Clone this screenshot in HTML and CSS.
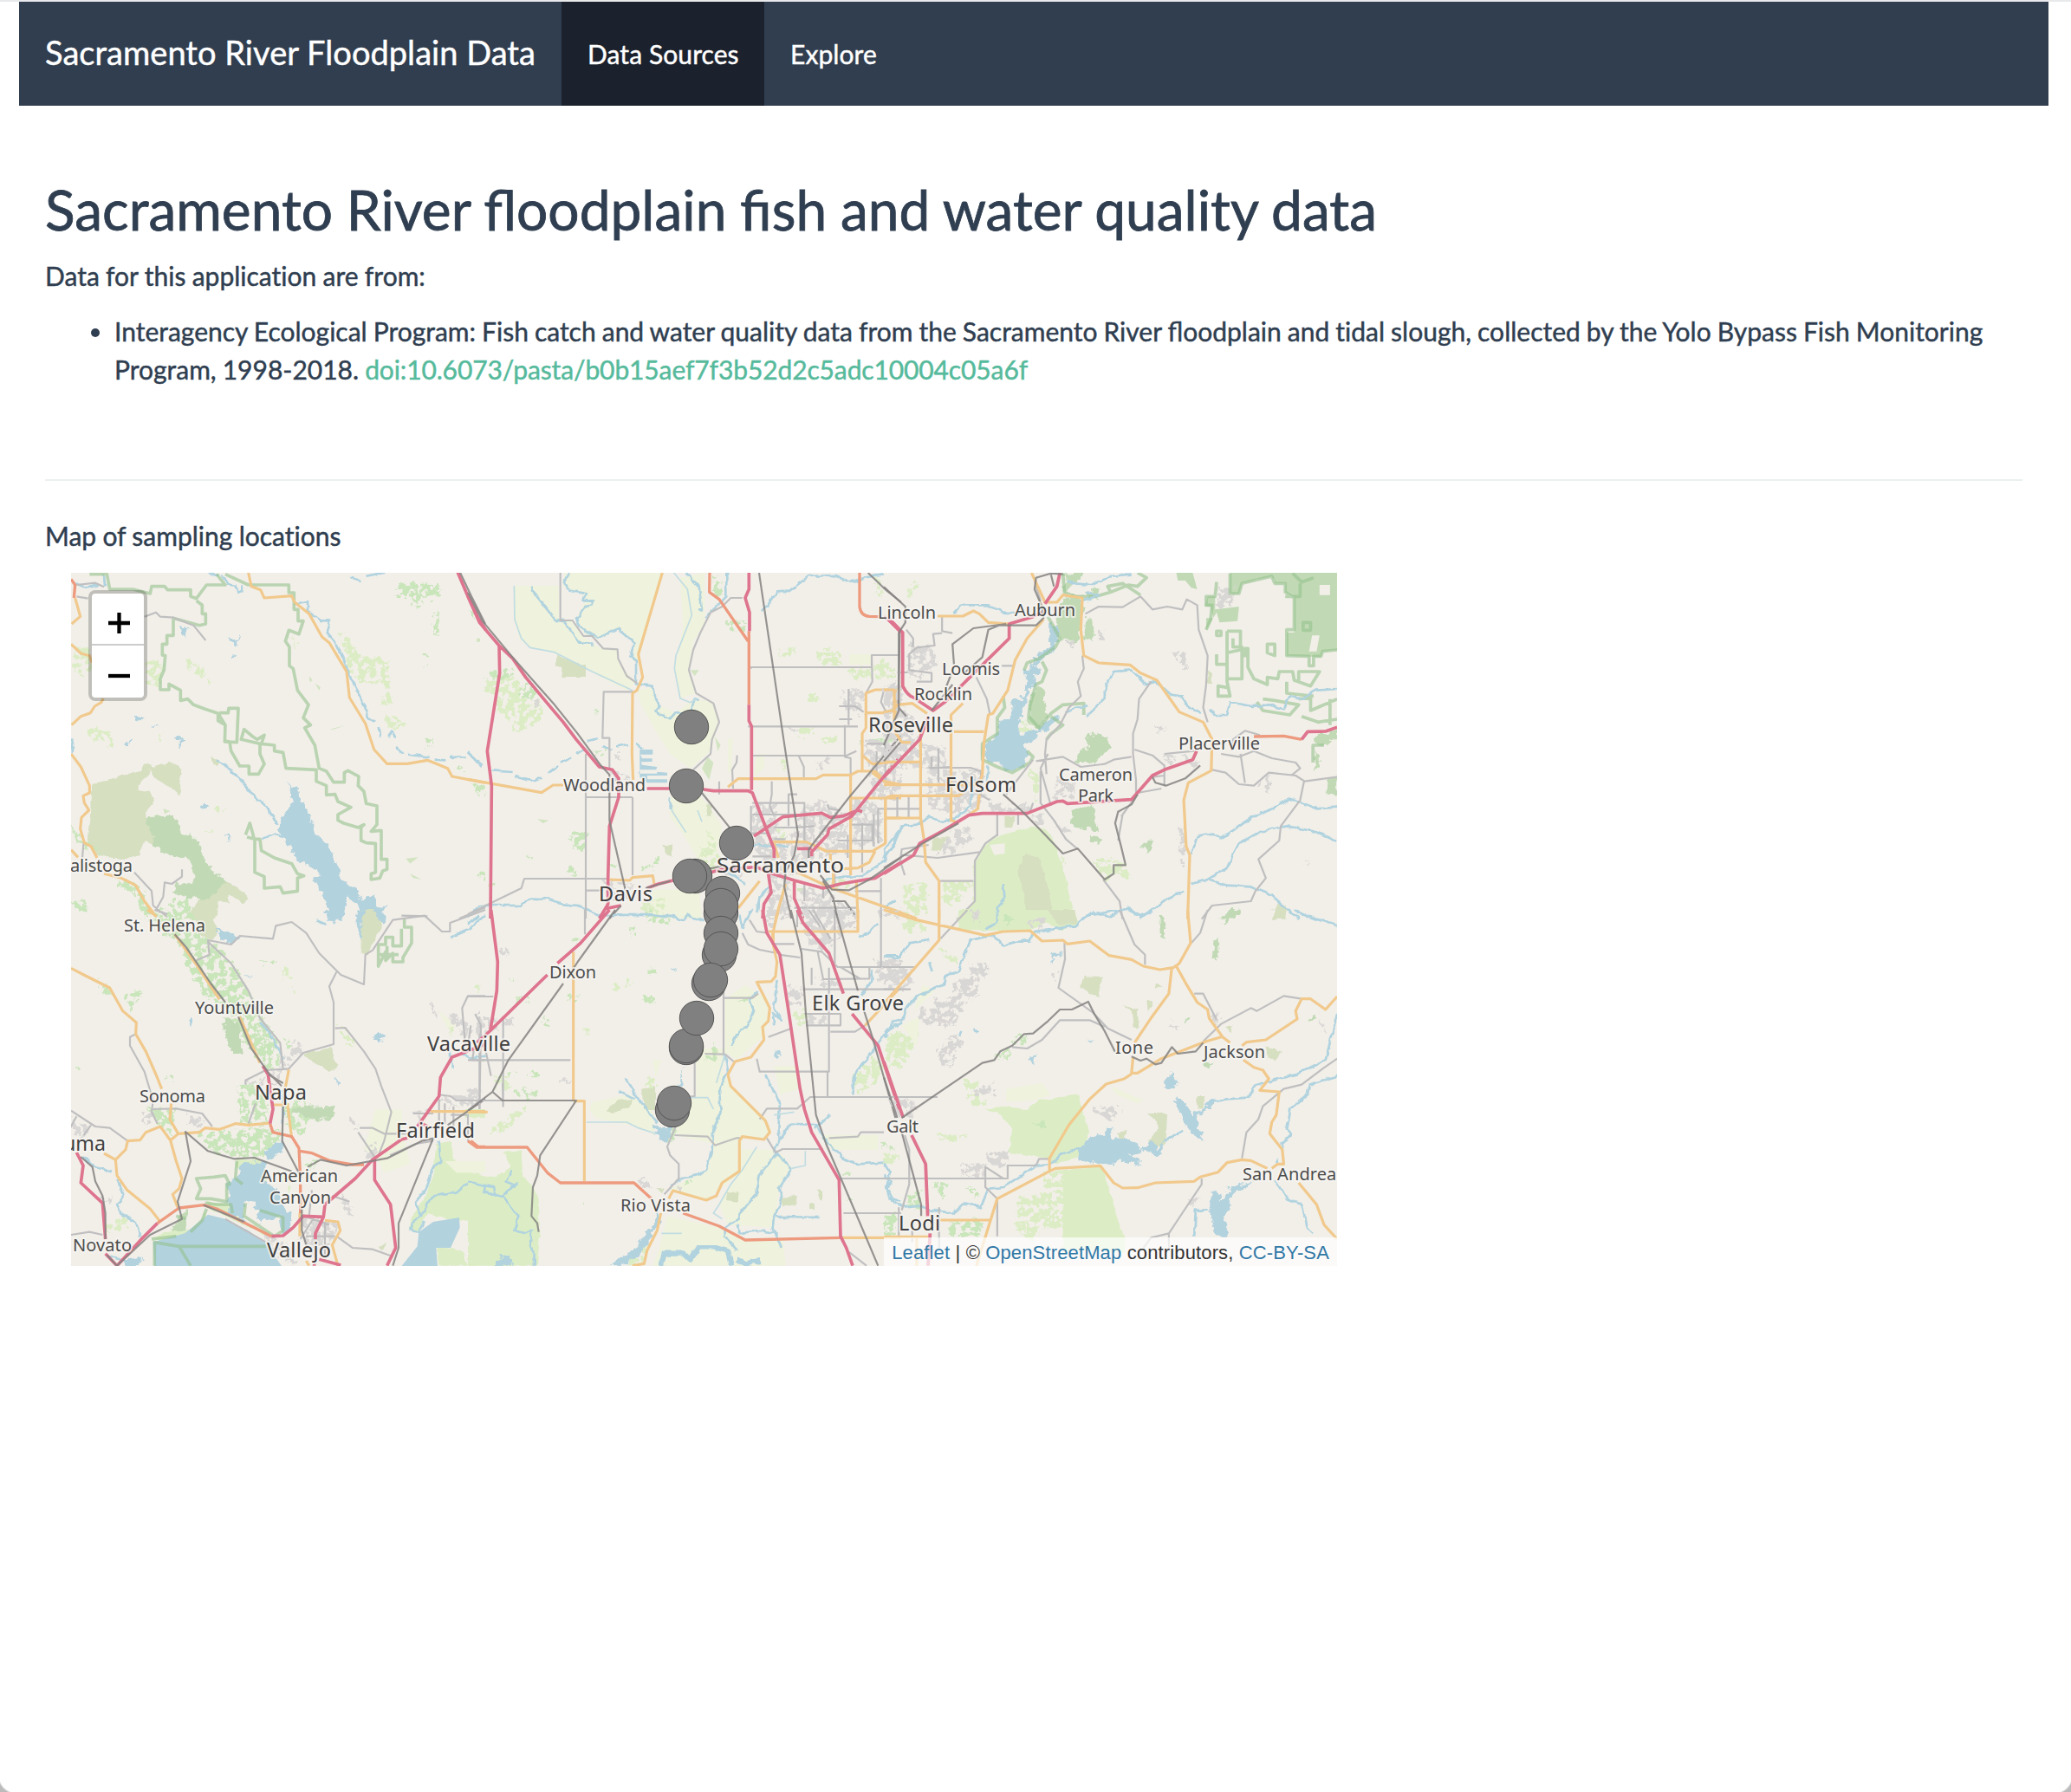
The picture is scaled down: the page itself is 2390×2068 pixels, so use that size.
FILE: index.html
```html
<!DOCTYPE html>
<html lang="en">
<head>
<meta charset="utf-8">
<title>Sacramento River Floodplain Data</title>
<link rel="stylesheet" href="styles.css">
</head>
<body>
<div class="page">
<nav class="navbar">
  <a class="brand">Sacramento River Floodplain Data</a>
  <a class="tab active">Data Sources</a>
  <a class="tab">Explore</a>
</nav>
<main class="content">
  <h2>Sacramento River floodplain fish and water quality data</h2>
  <p>Data for this <span class="plain">application</span> are from:</p>
  <ul>
    <li>Interagency Ecological Program: Fish catch and water quality data from the Sacramento River floodplain and <span class="plain">tidal</span> slough, collected by the Yolo Bypass Fish Monitoring Program, 1998-2018. <a class="doi">doi:10.6073/pasta/b0b15aef7f3b52d2c5adc10004c05a6f</a></li>
  </ul>
  <hr>
  <p>Map of sampling <span class="plain">locations</span></p>
  <div class="map">
  <svg class="tiles" viewBox="82 661 1461 800" width="1461" height="800">
    <defs>
      <filter id="rough" x="-5%" y="-5%" width="110%" height="110%" color-interpolation-filters="sRGB">
        <feTurbulence type="fractalNoise" baseFrequency=".04" numOctaves="3" seed="4" result="n"/>
        <feDisplacementMap in="SourceGraphic" in2="n" scale="34" xChannelSelector="R" yChannelSelector="G"/>
      </filter>
      <filter id="wavy" x="-5%" y="-5%" width="110%" height="110%" color-interpolation-filters="sRGB">
        <feTurbulence type="fractalNoise" baseFrequency=".035" numOctaves="2" seed="9" result="n"/>
        <feDisplacementMap in="SourceGraphic" in2="n" scale="16" xChannelSelector="R" yChannelSelector="G"/>
      </filter>
      <filter id="speckle" x="-5%" y="-5%" width="110%" height="110%" color-interpolation-filters="sRGB">
        <feTurbulence type="fractalNoise" baseFrequency=".05" numOctaves="3" seed="2" result="n"/>
        <feDisplacementMap in="SourceGraphic" in2="n" scale="34" xChannelSelector="R" yChannelSelector="G" result="d"/>
        <feColorMatrix in="n" type="matrix" values="0 0 0 0 0  0 0 0 0 0  0 0 0 0 0  0 0 0 14 -6" result="m"/>
        <feComposite in="d" in2="m" operator="in"/>
      </filter>
    </defs>
    <!-- north west: Lake Berryessa, Calistoga -->
    <g transform="translate(60 640) scale(.33333)">
      <path class="heath" d="M136 796L310 746 315 728 345 726 350 738 410 718 448 738 443 834 410 806 370 786 350 764 340 745 326 768 296 798 296 816 340 822 354 852 320 892 330 920 370 980 360 1010 320 990 300 1040 262 1054 190 1048 150 1034 122 990 132 900ZM505 1200L600 1130 650 1160 682 1190 660 1208 610 1172 615 1205 575 1200 570 1240 520 1262 460 1262ZM550 698L580 715 570 732 555 725ZM1090 1215L1130 1230 1140 1262 1068 1262Z"/>
      <path class="wood" d="M330 906L425 910 445 960 510 985 515 1030 550 1090 606 1135 540 1192 470 1186 415 1170 430 1140 488 1128 480 1060 400 1036 345 1010 355 980 325 930Z"/>
      <path class="grass" d="M78 320L130 325 136 380 140 410 100 420 72 392ZM328 372L380 372 376 456 330 450ZM122 605L165 600 210 625 208 670 180 650 130 635ZM990 264L1030 290 1060 345 1130 350 1165 375 1170 440 1180 520 1140 525 1155 450 1070 445 1030 410 1015 340ZM1150 548L1190 560 1228 592 1190 610 1150 590ZM825 285L852 310 840 325 825 318ZM462 358L490 372 530 400 525 430 480 400ZM530 425L560 440 545 455ZM370 615L382 632 370 645ZM560 880L605 875 580 895ZM530 958L556 960 540 968Z"/>
      <path class="orchard" d="M1190 125L1205 98 1340 103 1344 140 1320 160 1280 150 1280 182 1245 180 1240 150 1200 145ZM1322 210L1340 190 1340 283 1322 280ZM1294 632L1320 635 1315 675 1296 660ZM1445 190L1468 215 1455 220ZM1480 1100L1500 1100 1500 1125 1482 1120ZM1280 345H1300V355H1280ZM1282 378H1302V387H1282ZM1406 735L1426 738 1412 752ZM1450 790L1500 805V840L1465 825ZM70 930L100 980 160 1020 170 1045 120 1020 80 980ZM230 1130L270 1125 330 1180 350 1262 320 1262 290 1180 235 1150ZM410 1200L470 1190 500 1262H420ZM70 1200L110 1195 130 1240 75 1225Z"/>
      <path class="spot" d="M890 420L902 435 893 442ZM910 445L930 460 925 470ZM960 605L1018 590 975 605ZM1225 1052L1268 1048 1240 1070ZM1240 1105L1280 1125 1250 1120ZM385 880L410 888 390 898Z"/>
      <path class="water" d="M820 780L830 805 845 800 865 850 890 895 915 965 950 1000 990 1085 1005 1130 1060 1160 1070 1200 1110 1180 1125 1215 1160 1220 1120 1262H1080L1060 1220 1020 1180 1010 1262H950L960 1230 935 1180 905 1120 930 1110 895 1080 850 1060 810 990 785 960 790 920 820 870 830 840ZM440 250L475 255 470 285 445 278ZM612 290L632 295 652 278 638 300 645 312 628 305ZM622 345L640 350 632 362ZM290 556L322 570 310 580 295 572ZM432 635L460 632 448 665 440 670ZM515 870L530 857 540 872 525 882ZM600 970L618 978 606 988ZM240 655L270 645 270 665 255 650ZM335 593L365 590 350 600Z"/>
      <path class="river" d="M180 70L183 110M590 70L610 102 635 108 640 132 655 125 660 105M545 65L580 75M1035 80L1068 90M1085 75L1150 62M840 170L885 162 885 195 912 215 930 228 960 230 950 270 985 310 1015 375 1035 430 1060 475 1090 540 1095 572 1120 577M1130 600L1135 630M1165 630L1178 612 1188 632M1195 665L1212 692M1235 692L1310 702M1325 710L1360 712M1380 702L1430 700M1440 685L1492 732M570 712L610 735 640 765 690 825 750 880 780 935M730 985L770 965 800 975M85 100L120 115 165 105M70 640L68 690"/>
      <path class="park" d="M130 68H190L200 120H280L340 135 345 110H390L400 122H480V145L500 152 535 105H600L570 68M500 160L520 175V205H532V240L510 245 420 220V280H398V310H382V348L392 350 388 400 375 430V468H405V448L445 470V505L470 500 490 520 530 535 575 550 600 590 598 648 640 650 645 532H612L610 548H580M600 68L680 105H820V132H838V190H852V230H870L855 275 820 262 808 300 822 320V385L835 395 850 470 888 520 870 565 895 590 875 600 910 660 925 740 950 750 975 788H1012V755L1025 748 1062 768 1060 800 1080 820 1088 862 1125 870V935L1105 958 1140 955V1055H1160V1090L1145 1095 1135 1120 1105 1125V1105L1120 1100V1000L1088 998 1070 990V945L1080 935 1060 945 1010 930 990 920V900L1035 875 990 855 980 830 950 832V800L915 785V745L810 740 800 685 770 680V660L725 655 735 625 710 640 695 630 665 605 655 640 720 655V690L735 725 715 760H682V732H650L620 680 615 648 600 645M575 545V575L600 590M670 970L685 930 695 965 700 985H720L725 1025 770 1050 830 1070 850 1105 872 1112 850 1120V1165L800 1172 790 1150 735 1155V1115L702 1100V985L675 978"/>
      <path class="minor" d="M85 105L150 98 180 112M85 145L125 152M320 215L360 200 375 215 420 218 490 245 532 297M110 990L105 1050M285 1100L345 1165 350 1215 400 1255M450 1090L450 1115 415 1140 390 1135 385 1185 360 1230M1210 1250L1300 1252M1410 1260L1500 1222"/>
      <path class="primary" d="M680 63L690 110 722 122 735 150 830 143 840 165 890 205 935 285 960 305 1020 405 1030 495 1085 585 1115 675 1160 724H1230L1300 712 1370 740 1385 768 1500 790M80 150L98 214 68 240M66 310L100 342 130 350 138 375M178 498L170 512 148 525 133 548 100 560 68 590M66 690L100 735 130 800 130 825 108 835 112 860 128 885 102 910 98 950 112 998 135 1010 156 1050M66 1022L90 1048M180 1105L240 1120 290 1145 320 1200 362 1255"/>
      <path class="trunk" d="M66 85L80 105 76 150"/>
      <path class="motor" d="M1404 60L1440 145 1475 220 1502 262"/><path class="rail" d="M1412 60L1450 140 1500 240"/>
    </g>
    <!-- north centre: Woodland, Sacramento -->
    <g transform="translate(540 640) scale(.33333)">
      <path class="farm" d="M162 108H315V225L360 232 400 285 460 325 515 330 520 370 580 445 550 470 430 408 310 345 215 322 180 295 160 225ZM330 63H335L330 110 400 140 405 165 375 220 405 275 450 290 525 255 578 310 570 370 590 360 600 330 672 63ZM735 80L820 63V240L780 300 765 400 790 480 735 498 715 400 745 250ZM585 470L640 460 660 520 720 550 780 500 850 510 870 580 840 680 770 740 700 690 650 610 600 520ZM700 840L810 840 880 940 860 1040 800 1060 740 960 700 910ZM900 640L918 635 910 760 900 750ZM640 1160L800 1160 810 1260H620ZM1000 690H1025V740L990 770ZM1320 345H1395V380H1320Z"/>
      <path class="heath" d="M306 345L350 365 408 385V423H325V392H306ZM670 1005H708V1040L685 1035ZM830 860L845 870 840 910 825 905Z"/>
      <path class="grass" d="M60 440L110 415 170 430 200 470 250 510 262 545 240 580 180 615 150 605 140 565 100 540 95 490 55 470ZM1213 328H1290V385H1235L1213 370ZM1300 395L1400 390 1450 350 1465 400 1480 395 1485 425 1340 430ZM1178 480H1215V508H1178ZM1145 600L1200 598V633H1145ZM805 1020L850 1010 880 1060 850 1090 800 1080ZM825 945L865 1010 840 1040ZM1085 695L1105 720 1095 760ZM1075 330L1125 320 1130 345 1080 350ZM1410 70L1445 130 1420 150ZM600 1205L660 1190 685 1200V1240H610ZM1225 640L1275 625 1280 650 1230 655ZM1075 950H1095V985H1075ZM960 1085H1000V1100H960ZM1240 1130H1320V1150H1240Z"/>
      <path class="orchard" d="M60 430L80 400 125 405 160 385 160 420 110 430ZM845 70L880 90 880 150 850 140ZM890 232L960 235 965 270 920 260 895 250ZM355 965L410 960V1022H365V1005L355 995ZM345 1070L370 1080 375 1110 350 1108ZM645 1045H667V1065H645ZM625 1075H645V1093H600V1080ZM490 1065H510V1083H490ZM40 1100H60V1120H40ZM75 1135H90V1150H75ZM440 535H447V553H440ZM430 680L480 675 470 698 435 695ZM175 480L210 440 240 490 220 510ZM1345 650L1400 640 1470 630V645L1360 655ZM205 1045H225V1055H205Z"/>
      <path class="spot" d="M30 290H42V302H30ZM770 400L800 400 785 420ZM675 85L685 90ZM810 740L830 700 850 720 835 780ZM855 630L875 660 865 680ZM240 915L280 920 260 930ZM625 1110L650 1115ZM1095 266L1105 268ZM1140 1155H1170V1165H1140Z"/>
      <path class="urban" d="M985 860L1070 865 1080 990 1130 960 1160 870 1240 850 1310 900 1310 1030 1200 1050 1140 1110 1040 1100 985 1010ZM1325 850H1400L1440 900 1430 1000 1330 1020ZM1370 640L1470 650 1500 620V850H1400L1380 740ZM1300 470L1370 460V560L1300 540ZM1200 730L1250 700 1260 710 1210 760ZM470 1130L570 1140 560 1200 500 1200ZM490 740L545 760 560 780H500ZM1100 600L1150 605 1130 615ZM1490 440L1500 450V540H1450V470ZM1040 1100L1120 1130V1260H1040ZM1140 1150L1250 1160 1300 1210 1330 1260H1160ZM880 1070L950 1080V1115H880ZM225 500H245V530H225ZM510 685H527V710H510Z"/>
      <path class="ponds" d="M595 675H640V692H597L603 706H638V717L600 718 602 728 655 735 652 745H595L590 758H655V752L690 755V765H620L622 778H690V790H620L595 770Z"/>
      <path class="river" d="M347 63L332 100 355 125 408 135 400 160 435 160 430 175 405 180 375 220 385 245 410 265 450 290 480 275 500 265 525 255 545 280 578 305 565 355 582 365V448L640 455 645 490 662 520 650 545 700 568 720 545M218 107L222 125 290 210 305 228 335 232 385 305H430V320M755 63L800 110 810 190 795 190M895 63L895 145 820 220M1017 190L1040 175 1070 130 1110 128 1180 75 1265 72 1325 95 1380 78 1440 70M720 550L770 550 785 500 800 500M0 685L45 732M85 748L155 753M165 768L235 783 255 772M280 755L310 732M320 722L360 703M375 690L405 672M410 645L450 638M465 660L500 680M515 665L555 657M585 655L600 670M695 840L708 885M0 1255L40 1215 180 1215 215 1190 275 1192 330 1210 380 1215 455 1248 630 1248 690 1255 720 1245M1500 950L1440 1020 1445 1060 1360 1115 1300 1115 1230 1130M1110 1010L990 1005M1050 1145L1010 1185 1000 1240M900 1100L960 1140"/>
      <path class="stream" d="M713 63L760 120 775 210 720 350 715 395 735 498 770 512 790 500M160 108L162 225 185 290 215 322 300 338 430 405 570 470M705 885L755 962M795 885L810 925"/>
      <path class="minor" d="M320 63V228H362L400 282H430L468 325 518 328 520 360 550 420 585 445M580 475H470L466 635H490V740M408 690V1260M570 840V1110M408 840H570M950 150H910L880 180 840 200 805 270 780 330 765 400 790 480 850 515 870 580 845 640 840 690 780 745M980 395V390H1398V348H1490M970 595H1350M985 696H1310L1345 680M1145 696L1163 735V778M1305 590V700L1325 705V1110M1378 480L1400 440 1398 350M1318 465V590M1285 525H1340L1370 545M1285 570H1330M0 1245L185 1155 195 1122H480M408 1163H470M932 695L930 720 915 745 918 810M870 785V830M1052 785V830L1045 870 1060 905M985 860H1165V1000M985 900H1160M980 965H1040M980 870V1010M1060 985H1100M1245 865L1250 880 1290 885M1440 880H1420V1000M1325 935H1400V990H1280M1365 930V1100M1405 900V1010M1440 470L1430 510 1445 540M1380 655H1445V780M1415 680V770M1430 1120V1260M1340 1165H1430M1130 1223H1350M1165 1140V1200M1230 1120V1190M1270 1080V1140M1315 970V1050M1060 945H1130L1200 940M985 1045H1050M1140 830H1110V940"/>
      <path class="primary" d="M673 63L590 345 605 425 585 470 570 480 568 690 572 780M0 778L255 824 295 798H330M900 805L935 776H1205L1230 763H1325L1350 750H1410L1430 770M1500 468H1410L1378 480V600L1365 620V750M1378 548H1460L1485 530M1480 470V560M1325 763V1110M1325 843H1500M1325 880M1445 843V1000L1400 1027H1240L1195 1005M1500 912H1447M1365 695L1400 725 1500 715M1400 755L1440 785 1500 797M1410 1027L1390 1065 1350 1085 1300 1088M490 1125L560 1128 570 1118 640 1112 645 1140M1055 995H1170L1240 1025M1255 1035V1070M1265 1090V1140M1345 1130L1350 1260M1260 1155L1500 1240M1140 1100L1260 1155M1010 1130L935 1225M1100 1140L1065 1260M1060 1000L1075 1050"/>
      <path class="trunk" d="M837 63L836 130 870 155 970 300M1356 63V180Q1360 212 1390 214L1425 215M973 265V520"/>
      <path class="motor" d="M0 145L40 235 108 315 155 360 200 425 275 515 330 580 375 640 455 735 500 745 522 775V840L490 940 485 1120 485 1210 455 1260M108 315L110 410 67 680 82 800 78 1260M973 63V120L960 150 975 200V265M973 520V575L982 595V815M620 810H700M815 813L850 818H970L985 825 1060 1020V1050M990 975L1090 908 1225 895 1255 910 1300 905 1350 885 1365 890M1500 695L1390 830 1330 905 1250 950 1245 970 1190 1030V1045M1190 1018H1140M1455 225L1500 270M530 1215L480 1225M620 1155L660 1140 710 1128M840 1100L880 1090 1000 1082 1040 1100 1130 1128 1230 1155 1290 1140 1410 1120 1500 1065M1130 1130V1190L1160 1260M1040 1105L1050 1170 1025 1210 1020 1260"/>
      <path class="rail" d="M0 132L50 230 150 350 220 430 300 520 380 620 460 730 490 762V920L545 1160M1008 63L1055 380 1090 620 1143 970 1130 1040 1100 1100 1095 1150 1120 1260M810 825L910 950M1500 625L1320 840 1180 1020V1050M530 1215L490 1260M615 1155L700 1130M835 1088L880 1078M1500 1048L1390 1125 1320 1162 1260 1160 1220 1110M1385 63L1450 125 1500 165M1495 270L1490 530M1230 1130L1265 1190 1280 1260M1260 1200H1305L1345 1255"/>
    </g>
    <!-- north east: Auburn, Folsom Lake, Placerville -->
    <g transform="translate(1020 640) scale(.34439 .33333)">
      <path class="wood" d="M600 63L665 68 635 100 605 130ZM600 150L670 145 665 230 650 300 590 295 575 240ZM675 130L715 120 720 150 690 155ZM680 215L705 235 700 300 670 290ZM510 460L535 465 545 560 525 605 485 580 490 510ZM680 625L735 620 770 665 700 720 640 720 655 680 690 670ZM640 880L700 870 705 920 720 950 680 955 620 935ZM880 985L903 990 890 1030 865 1015ZM1440 635L1519 600V640L1470 660 1438 650ZM1445 680L1460 690V740L1445 745ZM1490 770L1519 760V830H1485ZM690 975L725 980 720 1005 695 995ZM1150 1240L1190 1225V1245L1160 1262H1130Z"/>
      <path class="forest" d="M1160 63H1519V330L1470 335 1465 355 1350 350V260H1375V150L1345 130V100H1310L1300 75 1200 100 1190 135H1160ZM980 63H1035L1050 120 1030 115 1010 90 985 90ZM1085 145H1110V190L1190 180 1185 230 1125 235 1115 200 1080 260V220H1105L1095 180 1075 180Z"/>
      <path class="land" d="M1435 280L1460 280 1450 335 1425 335ZM1250 85L1310 85V110L1340 115V150L1375 160V270H1350V330H1300V210H1255L1200 205V110ZM1460 105H1495V140H1460Z"/>
      <path class="grass" d="M600 1040L605 1075 592 1060ZM690 1050L740 1045 780 1060 810 1070 830 1130 785 1105 740 1130ZM65 1145L145 1128V1245H70ZM195 1130H300L240 1215 200 1210ZM0 345L30 430 0 430ZM75 105L108 100V120L80 150ZM485 740L530 770 510 860 495 800ZM455 565L500 590 490 625 450 610Z"/>
      <path class="meadow" d="M335 1010L380 975 490 945 535 945 560 970 600 1080 640 1262H245L300 1200V1080Z"/>
      <path class="land" d="M355 1005L405 1000V1035L370 1040Z"/>
      <path class="heath" d="M475 1035L520 1050 550 1150 570 1262H480L465 1150 445 1095ZM165 985L215 975 190 1030 160 1020ZM405 905H440L430 945H405ZM1085 400L1100 410V450L1085 440ZM1320 1205L1350 1215 1345 1262H1300ZM325 665L340 640V700L325 695Z"/>
      <path class="urban" d="M210 750L330 745 345 850 300 900 200 890 150 880 145 730ZM0 450L60 440 65 540 100 560 120 650 210 670 210 740H0ZM85 300L160 320 180 380 120 430 80 410ZM230 950L280 940 300 980 230 1030 170 1050ZM350 850L400 870 480 860 500 890H360ZM575 770L640 785 640 840 570 850ZM495 900L540 890 530 935 495 925ZM570 920L625 960 600 975ZM1120 110L1180 115 1165 180H1115ZM965 345L1000 330 1030 400 1000 395ZM720 250L740 260 735 300 720 290ZM610 300L640 300 635 325ZM990 940L1008 950V1085L985 1070ZM1250 790L1300 760 1290 830 1260 810ZM930 690L980 700 960 740ZM1000 690L1060 720 1030 745ZM905 590L960 605 920 625ZM1400 1070L1430 1055 1420 1080ZM780 880L800 895 790 920Z"/>
      <path class="water" d="M495 375L528 395 522 415 505 420 500 460 470 520 465 555 452 575 455 620 480 620 540 590 530 600 505 645 475 655 480 685 490 695 470 710 475 735 410 748 385 720 345 710 330 660 360 640 390 610 390 575 425 570 430 510 475 490 480 430 462 405 470 395 495 395ZM520 605L560 565 590 560 545 615ZM555 225L590 265 570 330 505 380 495 360 555 320Z"/>
      <path class="park" d="M600 65L605 130 640 145H710L760 130 750 110 800 100 860 140M850 63L880 80 850 110 820 105 760 130M550 215L590 290 575 320 520 360 480 375 470 400M530 370L545 400 530 440 510 450 490 520 485 560 520 600 560 550 600 520 670 515V555M400 490L405 530 380 565V620L330 655V710L380 735 430 755 490 720 500 700 480 680M560 560L600 590 560 620 545 640M1115 95L1110 145H1080V175H1100L1095 225 1080 260M1150 265H1195V330L1150 340V440L1160 490H1120V455L1150 460M1150 265V380H1115V345M1115 265H1130V280H1115ZM1170 290V320H1200V430H1155M1200 350H1220V390L1240 430 1285 450V425L1320 430 1325 405H1370L1375 435 1430 455 1460 405 1390 405V440M1350 440V480L1440 490M1270 500L1310 505 1390 520 1360 555 1270 540 1250 510M1390 500L1430 495V540L1519 500M1400 560L1455 580 1519 570M1285 310H1310V350L1285 340ZM1405 235H1430V262H1405ZM1210 325H1220V350H1210ZM1495 500V590M1475 660H1438V720M1160 65V135H1190L1200 100 1300 75 1310 100H1345V130L1375 150V260H1350V350L1425 352V385H1440V352H1465L1470 335 1519 330M1370 65L1400 95 1440 80M1395 100V145H1345"/>
      <path class="river" d="M235 200L260 175H350L400 200 440 202M655 165L720 140 680 130M680 560L740 500V470L770 405 830 400 880 450 910 440 960 485 1000 490 1020 530 1060 545M1090 535L1110 555 1150 555 1160 510 1230 525 1290 520 1340 535 1360 490 1400 500 1450 470 1519 465M615 90L640 100 700 105 760 75 830 68M0 1050L35 1000 60 940 110 935 150 910 200 925 245 910 290 870 300 780M610 545L680 520M1030 1040L1050 975 1100 965 1130 985 1170 955 1240 905 1280 890 1360 845 1450 880 1519 875M1085 1125L1150 1085 1170 1040 1190 1000 1260 960 1350 940 1450 960 1519 992M1030 1140L1085 1125 1150 1145 1230 1150 1300 1180 1390 1262M665 1262L700 1240 760 1255 820 1220 860 1255 910 1220 950 1190 1005 1165M400 1140L405 1190 380 1220V1260M350 730L345 790M0 1220L40 1195"/>
      <path class="minor" d="M195 215V265L230 272M195 272L165 275 170 315 110 322 85 345V400L160 410V440L110 440M75 260L98 290V320M310 425L345 500 355 550M395 385H435M665 350L670 395 650 440 660 490 620 530 590 590 545 640 540 690 545 760M510 715L600 700 660 735 740 725 770 710 830 700M895 440L855 500 850 570 835 620V690L845 780V830M675 205L720 180 800 182 860 145 900 190 950 180 1000 190 1015 155 1050 175 1055 260 1085 350 1080 450 1070 530 1085 580M840 675L900 695 940 730V800M940 690L1040 680M940 765L900 770M1100 745L1145 755 1190 795 1240 800 1290 755 1380 765 1410 785 1519 770M1195 690L1210 790M1130 690L1190 700 1240 680 1300 705 1380 720 1395 740 1365 765M1408 785L1395 850 1330 940 1325 990 1255 1055 1280 1120 1245 1165 1230 1200 1100 1215 1065 1262M525 750V860L570 920 610 985 650 1020M550 690L525 740 560 870M500 710L410 830M380 890V975M450 890V935M150 738H290L325 750V830M0 880H120M183 670V790M45 840V910M83 840V910M0 348H45M45 408H80M380 970L340 1000 305 1060V1200L245 1262M735 1125L790 1200 800 1262M185 1130H300M60 1040L180 1050 320 1030M160 700V740L220 735M505 90L525 160M850 830L800 900 785 990M150 1005L60 1020 55 1060 70 1110M850 825L930 810M355 850L320 830M500 860L490 890M1165 680L1170 640 1210 610 1260 625"/>
      <path class="primary" d="M180 213H265L300 195 320 205 350 235 420 240M495 63L520 120 540 165 580 165 600 140 665 150 660 260 670 350 720 375 825 382 860 410 915 435 990 545 1070 580 1100 640 1097 748 1020 790 1005 850 1013 1010 1025 1040 1018 1262M535 225L480 290 440 365 415 470 365 550 350 555 335 655 330 760M335 613H235M0 468H35V610L60 650H90M0 545L30 540 45 520 95 515 145 550M265 515L225 555V850L225 920 240 925M123 600V910L135 990 140 1065 185 1130V1262M0 718H125M0 797H320L330 760M0 845L25 835H250L265 825M0 912H120M5 845V1000M320 830L315 880 280 905M0 1218L110 1260"/>
      <path class="trunk" d="M1240 630L1340 628 1400 640"/>
      <path class="motor" d="M0 215L30 235 63 270V455Q80 490 100 495L165 540 205 510 420 290V240L500 215 530 200M540 170L580 110 590 63M150 560L120 640 0 770M0 1105L100 1040 120 1000 200 955 285 902 330 896H480L580 855 600 853 615 862 830 848 900 765 940 745 1035 710 1048 680M1400 640L1420 613 1480 612 1519 598"/>
      <path class="rail" d="M0 112L72 180V235L50 270V540L0 660M55 650L0 715M50 530L75 560M210 455L235 390M230 450L160 540M600 68L560 65 510 80 505 120 530 180 535 220 510 245 385 245 350 260 330 355 270 410M235 380L230 310 300 255 410 240M0 1085L130 1000 250 930M400 830L460 885 540 970 600 1035 650 1018 740 1125 770 1105 770 1075H810L795 1010 775 930 785 890 830 865 850 830M900 770L910 790 945 800 1010 775 1060 730M560 70L570 110"/>
    </g>
    <!-- south west: Napa, Vallejo, Fairfield -->
    <g transform="translate(60 1050) scale(.33333)">
      <path class="heath" d="M490 0H575L560 40 580 75 550 105 510 85ZM1068 0H1125L1145 50 1125 90 1090 155 1070 150ZM870 500L970 475 975 520 995 540 960 560 900 525ZM1130 1165L1160 1150 1145 1180Z"/>
      <path class="orchard" d="M360 0L420 0 480 70 560 110 630 190 680 280 720 360 780 450 790 540 750 555 700 500 650 450 600 340 520 290 470 190 430 110 350 50ZM640 610L710 600 740 640 745 745 650 740ZM500 770L740 755 800 760 780 840 700 860 560 840ZM800 670L870 650 900 720 860 780 820 750ZM250 290L310 280 300 310 270 350ZM160 230L210 290 165 290ZM330 680L430 690 410 780 350 730ZM870 880L920 870 900 900ZM385 575L425 580 410 600ZM720 175L780 175 770 195 725 190ZM810 440L835 470 815 490ZM80 545L110 545 100 555Z"/>
      <path class="wood" d="M595 370L650 400 660 500 620 490 600 430ZM830 690L900 675 985 685 960 730 880 720 850 705ZM430 1070L470 1040 465 1130 420 1110Z"/>
      <path class="meadow" d="M640 860L720 865 745 930 730 980 640 890ZM535 1010L600 1015 670 1080 770 1130 700 1110 600 1060 540 1035ZM1330 810L1380 800 1400 900 1500 920V1090L1380 1070 1300 1050 1270 1110 1235 1110 1240 1070 1290 1000 1320 920ZM345 1130L420 1110 500 1110 530 1040 540 1080 480 1130 380 1150ZM1330 1165L1420 1180 1440 1232H1340ZM1430 690H1500V720H1430Z"/>
      <path class="grass" d="M785 240L810 195 830 235ZM820 270L850 280 835 290ZM1370 400L1400 395 1380 440ZM180 1095L260 1060 270 1100 200 1120ZM980 400L1020 410 1050 475 1020 460ZM780 900L830 930 820 990ZM1465 265L1490 260 1475 285Z"/>
      <path class="farm" d="M1120 690H1210L1220 800 1240 880 1150 910 1120 850 1080 830ZM1340 350L1400 400 1370 410ZM1360 870H1500V910H1400Z"/>
      <path class="urban" d="M830 450L870 465 865 500 830 510ZM745 560L795 560V600H750ZM670 590L740 580 735 605 675 600ZM470 710L530 730 520 755 475 745ZM70 720L130 760 110 785H70ZM1030 720L1060 740 1055 765 1030 750ZM1080 830L1120 800 1130 870 1090 870ZM1250 700L1300 690 1280 740ZM1390 350L1440 400 1460 420 1430 440 1370 370ZM870 1060L990 1080 970 1170 900 1200 860 1130ZM1000 980L1030 1010 1045 1065 1010 1040ZM315 700H350V740H315ZM160 990L210 990 200 1020 175 1010ZM790 500L830 520 820 550 790 540ZM1310 310L1340 370 1320 360ZM1340 650L1480 640V680H1350ZM720 1110L850 1180 840 1232 770 1190Z"/>
      <path class="water" d="M565 55L605 80 655 95 630 115 590 100ZM945 0H985L975 50ZM1055 0H1075L1070 110 1055 60ZM1110 0L1165 20 1145 50ZM665 870L690 880 740 870 730 940 770 960 790 1010 830 1050 825 1100 800 1130 790 1060 720 1080 700 1020 670 1015 665 1075 615 1060 605 950 640 920ZM800 790V830L750 870 735 840ZM1110 435L1135 425 1155 445 1130 460ZM980 575L1000 595 985 610ZM470 385L490 375 485 400ZM665 225L690 228 680 235ZM250 1215L310 1200 300 1232H255Z"/>
      <path class="bay" d="M540 1055L600 1070 680 1110 740 1155 800 1240H355L350 1150 460 1120ZM1270 1115L1320 1080 1410 1065 1412 1100 1380 1170 1330 1170 1335 1240H1205L1265 1165Z"/>
      <path class="river" d="M110 855L150 890 210 908M225 930L250 985 225 1020 240 1050 290 1080 305 1130M720 390L750 420 790 490 800 520M800 620V740M1500 18L1440 70 1380 95M1340 800L1345 870 1315 900 1300 960 1260 1010 1280 1060 1245 1085 1240 1110 1270 1115 1290 1080M1275 1060L1320 990 1400 980 1440 945 1500 940M1420 500L1450 515 1500 505M1385 530V550M190 1195L235 1210M915 37L950 50M1380 490V530M740 840L790 810"/>
      <path class="park" d="M500 930L560 925 600 920 615 950H605V1010L550 1000 500 1000 515 965ZM530 1015L570 1020H620L625 1050M535 1035L520 1075 480 1115M350 1150L440 1165H740M440 1165L480 1232M355 1150L355 1232M670 1015L665 1060 710 1090 770 1130 800 1110V1065L720 1040M640 870L635 930 660 950M1220 30V60H1245V115L1215 165V180H1180V150L1155 175V145L1130 195V120H1155V95H1180V125H1210V65M1130 155H1200M1160 125V150M430 1060L465 1070M345 1140L430 1130"/>
      <path class="minor" d="M355 0L400 15M500 175L545 155 540 105 620 120 650 90 765 100 775 55 830 42 880 80 925 150 1000 225 1080 258 1085 155 1110 140 1180 35 1290 20 1350 75H1378V45L1500 0M540 110L620 185 680 280 720 375 790 460 800 550M985 215L960 265 975 320V465L870 495 820 550 740 555 670 590V605M980 410L1015 408 1080 490 1120 550 1140 610 1175 700 1150 800 1130 850M350 690L430 688 520 705 555 750M345 700L350 660 320 560 270 470V440L290 430M680 740L705 670M345 700L365 740M1500 298H1440L1420 340 1430 460 1460 490 1455 520H1500M66 695L150 750 200 755 262 800M1065 755L1110 755 1150 775H1230M1120 860L1060 770M1250 705H1320M1340 640L1380 645 1400 660H1500M1340 655V760M1380 710H1440V800M1170 850L1260 810 1320 800M66 1125L130 1115 175 1125M970 990L1030 1010M870 1060L960 1090M880 1130H980M910 1060L860 1140M945 1080V1200M985 1130L1040 1170 1110 1175 1180 1200M85 715L60 760M135 745L110 780M1480 370V690M1450 400L1440 470M1360 670V740M1390 680V760M900 970L890 1060M600 1070L740 1150"/>
      <path class="primary" d="M330 0L362 22M66 202L110 225 200 270 245 350 292 390 290 430 325 490 360 570 380 620M413 670L408 725 437 775 510 770 530 755 580 760 635 740 680 745 755 738M437 775L410 798 375 750 325 770 305 797 262 800 255 830 220 865 225 920 260 970 340 1035 375 1080M180 843L220 865M410 798L430 870 450 930 440 965 418 985 435 1030M425 85L500 190 580 310M650 370L720 530M765 675H810M820 553L808 615M815 670L830 790M1310 698H1500M945 1075L990 1080 998 1110 970 1160 990 1232M858 1050V1130M880 1215L890 1232"/>
      <path class="trunk" d="M755 740L765 770 830 785 855 825 860 930M858 835L900 842 960 868 1040 882H1080M860 950V1050M365 1085L440 1032 525 1022 575 1037 760 1130M1450 800L1475 820H1500"/>
      <path class="motor" d="M730 540L748 570 765 690 755 740M85 840L108 885 100 945 175 1015 185 1140M185 1190L225 1232 305 1145 365 1085M760 1130L800 1128 835 1100 870 1060 940 1063 945 1020 1050 930 1110 865 1210 795 1230 790M940 1063L912 1120V1140M925 1210L1000 1230M908 1225V1232M1265 750L1340 645 1345 580 1385 510 1500 465M1117 860V935L1172 1020 1190 1170 1160 1232M1300 750L1280 740"/>
      <path class="rail" d="M425 85L465 130 550 255 600 320M645 370L690 480 750 565 795 610M100 855L140 890 150 940 175 990 185 1050V1140M190 1195L225 1232 340 1125 450 1070 435 1010 480 870 462 768 540 835 630 862 700 858 830 905M800 680L797 800 860 920M525 1022L665 1080M865 1030V1110L880 1160M885 890L930 865 1020 885 1160 860 1280 800 1325 790M1320 790L1200 1085V1170L1180 1232M1370 745L1500 655M750 570L800 600"/>
    </g>
    <!-- south centre: Delta, Rio Vista -->
    <g transform="translate(540 1050) scale(.33333)">
      <path class="farm" d="M790 480L900 480 880 560 920 620 1030 720 1050 760 1030 790 950 790 945 910 870 970 820 1005 700 965 830 900 850 810 720 780 740 660 790 650ZM430 665L560 640 640 700 645 770 560 745 440 720 420 690ZM690 1060L870 1100 960 1140H1090L1100 1232H640L660 1180ZM1050 830L1090 850 1120 890 1080 950 1060 1100 900 1090 870 1020 900 960 940 920 950 830ZM960 260L1040 310 1035 400 1020 440 930 520 890 490V310ZM1230 780H1420V830L1260 830ZM640 520H670L650 580ZM1060 540H1145V620L1080 640Z"/>
      <path class="heath" d="M600 620L648 610V690H610ZM480 695L520 660 570 655 560 680 500 705ZM895 980L938 975 935 1010 890 1005ZM1085 995L1140 990 1135 1020 1090 1028ZM1210 970L1230 975 1225 1010ZM1185 1018H1200V1038H1185ZM655 960L680 965 670 985Z"/>
      <path class="meadow" d="M120 835H185L190 920 240 980 245 1060 250 1110 240 1232H0V930L100 920 150 890Z"/>
      <path class="grass" d="M605 585L648 582V620L605 610ZM60 780L110 740 150 710 205 670 200 700 130 760ZM1130 350L1165 340 1175 395 1130 400ZM1330 585L1400 510 1440 540 1410 600 1350 640ZM1450 470L1500 400V520L1455 500ZM560 1190L620 1150 610 1220 545 1232ZM90 575H145V625H95ZM500 260H525V278H500ZM403 408H425V430H403ZM545 240H565V260H545Z"/>
      <path class="orchard" d="M163 622H240V655H163ZM210 560H243V580H210ZM143 560H162V583H143ZM262 370L280 375V408H265ZM605 300H648V322H610ZM625 200H648V220H625ZM562 58H582V98H562ZM145 238H160V255H145ZM162 300H210V320H165ZM345 298H385V318H350ZM365 95L395 100 370 120ZM845 465L865 470 860 520 815 520 840 500ZM1290 910H1328V925H1290ZM1305 990L1335 1000 1310 1010ZM610 0L700 30V60L620 40ZM695 760L720 750 710 800 690 800ZM745 945L780 925 770 945ZM930 315L980 300 970 320ZM1430 800L1490 830 1450 840ZM395 1020L410 1020 405 1027Z"/>
      <path class="urban" d="M30 350L80 380 155 370 160 400 90 415 30 430ZM110 130L145 140V160L115 155ZM580 930L615 930 635 965 620 975ZM310 595L330 580 360 590 345 600ZM720 950L745 955 740 970ZM1030 0H1075L1060 70 1040 50ZM1110 260L1160 270 1155 330 1115 330ZM1175 365L1240 370 1250 395H1175ZM1150 0H1350L1345 60 1230 140 1180 130ZM1200 240H1290V270H1200ZM1420 0H1500V20H1425ZM0 620H40V660H0ZM1410 170L1500 180V250H1420Z"/>
      <path class="water" d="M640 740L690 760 700 790 685 810 650 780ZM660 1035L670 1060 650 1110 600 1190 545 1232H490L580 1170 640 1090ZM690 770L700 740 745 540 740 600 715 740 700 790ZM90 1215L130 1195 165 1220 130 1232H90ZM710 200H725V210L700 205ZM1060 490L1078 500 1070 515Z"/>
      <path class="river" d="M60 975L120 990 145 1020 175 1060 160 1110 200 1120 220 1110 215 1160 230 1200 230 1232M60 955L90 960 95 985 55 980 60 955 0 940M120 990L150 960 175 945M155 905L130 940 165 955M545 585L580 640 655 740M522 625L580 655M890 500L900 560 870 620 875 700 850 760 845 830 825 900 790 920 740 930 700 960M1005 280L975 310 990 350 970 400 930 430 915 470M1060 400L1055 360 1085 380 1060 340 1070 240M1030 570L1050 610 1080 670 1075 760 1080 790 1060 830 1085 860 1120 900 1080 960 1085 1010 1060 1060 1055 1100 1085 1170M1070 840L1040 880 1010 920 1000 980 940 1050 935 1070 890 1100 890 1130 930 1180M935 1120L1010 1110 1070 1120M1075 800L1120 740 1210 745 1230 790 1300 860 1350 880 1440 875 1460 910 1450 960 1470 1000 1500 1010M1255 710L1200 760M1500 390L1450 420 1400 490 1340 570 1330 640M935 1090L940 1115M0 50L40 20M495 15H620L720 25 745 38 760 20 790 30 815 40M1065 1062L1100 1062 1220 1065M1420 45L1380 85 1350 90M1500 160H1450M1400 210L1395 250 1360 300M940 20L950 60 985 0"/>
      <path class="delta" d="M668 1232L680 1190 750 1190 770 1210 800 1165 850 1165 900 1180 912 1232M930 1210L960 1225 1010 1215"/>
      <path class="stream" d="M410 735L450 735 550 735 590 755 650 775M760 650H830L850 690M1000 820L950 900 910 950 870 1020 850 1050 880 1070M1168 835V885L1120 895M890 500L860 600M740 1120H670M1060 710L1130 700"/>
      <path class="minor" d="M0 300H88M122 370V680L120 600M0 520H355M405 0V85M0 660H120M25 360L45 400 40 690M60 480L80 575M885 180V500L820 498M885 305H985L1005 290M890 500L920 525M785 530V645L740 648M715 780L830 785 855 815 930 790H945M740 700L690 820 700 850 730 880V930L680 985M1035 790L1065 840 1090 828H1230M1040 440L1120 410M1010 725L1035 688H1140L1185 648H1500M1000 515L1010 560H1250V200M1245 560V648M1255 422H1340L1375 400M1290 930H1500M1300 1050H1500M1155 135L1225 145 1280 198H1500M1130 118H1060M1140 60V0M1195 0L1255 100M1270 0V200M1290 198L1360 240M1190 200V260M1160 275H1500M1075 155L1150 165M1210 140L1230 240 1390 238V200M975 35L1000 75 1040 80M950 80L970 120 1010 138 1070 150M1165 360H1290V400H1170M1430 0V190M1250 790L1350 785 1360 770H1440M1180 0L1220 60M1430 110V200M1320 1185L1380 1232"/>
      <path class="primary" d="M365 145V660M365 662H403V940M0 700H68M1075 0L1057 75V120L1070 180 1065 230 1050 248 1000 250 1045 340 1040 385 1020 405 1025 450 980 510 925 525 900 570 910 610 1030 730 1045 770 1025 795 950 785 940 800V905L880 945 860 990 825 1005 710 972 695 1000M668 1050L655 1110 620 1180 610 1225 570 1232M1040 75H1350V0M1375 400L1500 265M1290 1135H1500M1055 120V70"/>
      <path class="trunk" d="M0 800L30 822H205L275 910 320 945H575L635 1000M745 1050L870 1095 960 1143 1290 1135"/>
      <path class="motor" d="M80 0L103 180 100 280 78 415M490 0L390 115 310 185M275 225L60 435 30 460M1020 0L1035 80 1080 155 1110 350 1150 620 1165 690 1190 770 1285 935 1290 1130 1310 1170 1332 1232M1140 0L1160 45 1250 150 1300 290M1330 360L1420 470 1500 710"/>
      <path class="rail" d="M510 0L380 180 345 235M330 255L140 520 85 630 0 695M85 630L120 660H375L250 850 240 920 225 960 220 1060 240 1085 245 1115M1118 0L1155 150 1170 360 1205 710 1240 810 1330 1020 1420 1232M1272 0L1350 280M1370 345L1400 440 1480 720"/>
    </g>
    <!-- south east: Ione, Jackson, Camanche -->
    <g transform="translate(1020 1050) scale(.34439 .33333)">
      <path class="meadow" d="M250 0H640L650 50 600 70 540 45 500 70 390 75 250 65ZM520 660L650 640 690 770 680 800 650 860 560 880 555 860 420 840 430 760 380 700 335 690 400 680 480 690ZM600 900L730 890 780 1050 810 1150V1185L600 1180Z"/>
      <path class="grass" d="M65 20L100 30 148 40V75H70ZM545 905L620 900 620 1180 600 1180 610 1110 530 1100 500 1150 440 1110 450 1000 540 980 530 930ZM15 430L110 420 100 480 60 550 15 540ZM275 640L330 620 345 675 290 680ZM265 590L320 590 310 620 280 625ZM160 770L290 780 230 810 190 790ZM185 130L250 170 245 185 200 160ZM0 850L50 850 50 875 0 880Z"/>
      <path class="orchard" d="M420 445L480 430 475 475 430 470ZM375 500L420 480V520L380 515ZM80 990L130 970 120 1040 80 1030ZM220 1080L330 1070 320 1130H215ZM280 960L320 965 310 1000ZM160 940L210 950 200 1010ZM490 740L550 720 540 750ZM405 20H435V50H405ZM0 1060L40 1050V1130H0Z"/>
      <path class="farm" d="M410 620L530 600 560 640 500 660 410 665ZM760 610L870 660 850 670 780 640ZM130 260L170 280 100 350ZM60 400L120 370 110 470Z"/>
      <path class="heath" d="M545 0H640L645 45 590 55ZM670 230H735L720 300 690 290 660 265ZM800 330L850 345 855 415 835 400 830 350ZM885 705H950L945 800 925 825 885 800 920 760 915 730ZM1045 645L1075 645 1070 690 1050 685ZM1280 475L1335 490 1310 525 1285 510ZM880 310L905 320 885 350ZM1290 0H1355L1340 8ZM780 770L815 765 800 800ZM1145 405L1170 400 1160 425ZM910 250L935 265 910 275Z"/>
      <path class="wood" d="M925 15L943 20 940 95 925 90ZM1190 0L1140 50 1130 45 1160 0ZM1105 110L1125 105 1118 170 1100 160ZM1075 535L1105 530 1090 550ZM1430 355L1450 375 1430 385ZM1010 370L1030 375 1015 390Z"/>
      <path class="urban" d="M290 0L315 0 325 50 300 45ZM485 35L545 30 535 70 495 65ZM120 340L180 345 165 310 235 300 230 260 290 220 285 190 350 185 355 230 320 250 315 300 260 330 245 400 200 405 120 390ZM0 200L100 210 90 260 60 280 0 260ZM180 480L230 430 275 460 240 490 235 540 190 545ZM295 625L375 600V640L310 640ZM700 685L800 680 800 700 760 730 700 700ZM345 840L420 825 415 890 350 880ZM255 880L340 870 330 930 260 920ZM0 645L100 660V720L50 710ZM0 165H65V195H0ZM1100 350L1125 345 1120 400 1100 380ZM560 220L580 210 570 245ZM1015 1005L1060 995 1030 1030ZM1455 350L1485 430 1470 420ZM945 405L970 380 980 410Z"/>
      <path class="water" d="M695 785L740 775 740 755 765 755 770 785 840 800 860 830 890 795 920 830 945 800 930 850 870 835 820 845 865 880 800 870 740 885 660 865 650 830ZM975 655L1015 670 1030 710 1070 680 1110 650V670L1060 705 1045 730 1075 800 1030 770 1000 720ZM1095 975L1125 985 1130 1010 1160 960 1235 940 1220 960 1170 980 1160 1010 1140 1070 1155 1130H1115L1090 1040ZM930 605L960 570 985 595 960 620ZM480 520L510 500 500 535ZM565 150L600 148 575 165 565 180ZM680 440L700 450 690 460Z"/>
      <path class="river" d="M0 160L50 165 85 115 155 105M0 440L30 390 65 380 75 340 110 300 200 260 205 230 250 210 270 160 290 105 330 95 370 90 400 125 440 110 490 110 500 80 580 65 640 55 680 20 740 10 800 0M340 65L380 45V0M820 0L850 20 900 5M1375 0L1400 15 1519 55M560 880L600 840 660 825M550 880L510 885 460 920 400 960 350 965 325 1030 270 1015 230 1050 160 1040 120 1025 70 1030 20 1000 10 960 25 940 0 920M940 800L1000 765M1080 670L1150 655 1220 650 1250 605 1380 570 1440 540 1480 520 1519 360M1519 575L1425 605 1420 640 1360 690 1350 750 1365 780 1335 810V830M1320 860V880M1310 935L1350 1000 1400 1020 1420 1100 1440 1120M1085 1040L1045 1040 1040 1130M300 415L315 425M260 420L250 440M150 180L165 210"/>
      <path class="minor" d="M605 115L607 170 585 270 700 355 750 410 830 450M790 0L840 120 875 155V190M1085 0L1060 80 1030 115M1040 290H1070L1115 380M0 198H110M190 100L280 0M0 648H180M340 960V890L400 930M0 930H415V885H510L520 862H555M340 930V960L380 1000V1130M1070 455L1130 395 1230 340 1250 350 1340 298 1400 308M1519 515L1470 550 1400 605 1340 620 1270 680 1255 725 1215 770 1200 860M1065 930V950L1000 1050 955 1120V1180M955 1120L895 1135 870 1170M430 475L480 480 530 450 590 382H690L740 405M70 780L85 830V950L60 1040M0 1050H50M50 1030V1130M185 1030V1180M95 1110V1150M0 275H90"/>
      <path class="primary" d="M0 0L110 35 340 88 400 75 490 72 530 108 600 105 615 118 690 108 755 158 830 172 870 195 925 207 970 200 990 185 1028 115 1018 0M185 0V105L0 325M965 200L955 290 895 375 840 460M980 195L1015 260 1050 320 1085 345 1090 375 1135 440 1160 460M1130 440L1080 455 930 515 850 565H830L835 510M830 568L805 585 745 603 690 655 620 745 555 860V905L380 1000 310 1232M555 905L575 895 725 886 770 945 800 963 850 962 910 945 1040 940 1060 925 1120 908 1150 875 1200 865 1230 868 1285 895M1200 470L1215 458 1280 450 1385 378 1380 350 1400 308H1430L1480 345 1519 300M1205 520L1240 545 1270 555 1290 585 1260 625 1325 630 1315 710 1300 735 1293 775 1335 830 1340 880H1320L1300 895M1390 945L1450 1020 1475 1090 1519 1140M190 1074H355M0 1132H150M110 1130V1232"/>
      <path class="motor" d="M0 525L65 720M93 780L140 880 147 1060M155 1120L148 1232"/>
      <path class="rail" d="M0 580L45 720M60 770L125 1020V1060M60 720L330 530 370 520 390 490 430 470 470 430 500 428 550 385 590 345 630 345 685 318 705 360 740 420 775 492M830 508L860 522 880 515 910 535 930 530 965 475 985 498 1045 490 1070 460"/>
    </g>
    <!-- place names -->
    <g class="town">
      <text x="650" y="913" textLength="95">Woodland</text><text x="1013" y="714" textLength="67">Lincoln</text><text x="1171" y="711" textLength="70">Auburn</text><text x="1087" y="779" textLength="67">Loomis</text><text x="1055" y="808" textLength="67">Rocklin</text><text x="1222" y="901" textLength="85">Cameron</text><text x="1244" y="925" textLength="41">Park</text><text x="1360" y="865" textLength="94">Placerville</text><text x="81" y="1006" textLength="72">alistoga</text><text x="143" y="1075" textLength="94">St. Helena</text><text x="225" y="1170" textLength="91">Yountville</text><text x="161" y="1272" textLength="76">Sonoma</text><text x="301" y="1364" textLength="89">American</text><text x="311" y="1389" textLength="71">Canyon</text><text x="84" y="1444" textLength="68">Novato</text><text x="634" y="1129" textLength="54">Dixon</text><text x="716" y="1398" textLength="81">Rio Vista</text><text x="1023" y="1307" textLength="37">Galt</text><text x="1287" y="1216" textLength="44">Ione</text><text x="1389" y="1221" textLength="71">Jackson</text><text x="1434" y="1362" textLength="118">San Andreas</text>
    </g>
    <g class="town city">
      <text x="827" y="1006.500" textLength="147" lengthAdjust="spacingAndGlyphs">Sacramento</text><text x="691" y="1040" textLength="62">Davis</text><text x="1002" y="845" textLength="98">Roseville</text><text x="1091" y="914" textLength="82">Folsom</text><text x="294" y="1269" textLength="60">Napa</text><text x="457" y="1313" textLength="91">Fairfield</text><text x="493" y="1213" textLength="96">Vacaville</text><text x="73" y="1328" textLength="49" lengthAdjust="spacingAndGlyphs">uma</text><text x="308" y="1450.500" textLength="74">Vallejo</text><text x="937" y="1166" textLength="106">Elk Grove</text><text x="1037" y="1420" textLength="48">Lodi</text>
    </g>
    <g class="site">
      <circle cx="798" cy="839" r="19.700"/><circle cx="792" cy="907" r="19.700"/><circle cx="850" cy="973" r="19.700"/><circle cx="802" cy="1011" r="19.700"/><circle cx="796" cy="1011" r="19.700"/><circle cx="834" cy="1031" r="19.700"/><circle cx="832" cy="1054" r="19.700"/><circle cx="832" cy="1045" r="19.700"/><circle cx="832" cy="1077" r="19.700"/><circle cx="830" cy="1102" r="19.700"/><circle cx="832" cy="1095" r="19.700"/><circle cx="818" cy="1135" r="19.700"/><circle cx="820" cy="1131" r="19.700"/><circle cx="792" cy="1209" r="19.700"/><circle cx="792" cy="1207" r="19.700"/><circle cx="804" cy="1175" r="19.700"/><circle cx="776" cy="1281" r="19.700"/><circle cx="778" cy="1273" r="19.700"/>
    </g>
  </svg>
  <div class="zoom">
    <a class="zoom-btn" aria-label="Zoom in"><svg width="25" height="24" viewBox="0 0 25 24"><path d="M0 12H25M12.500 0V24"/></svg></a>
    <a class="zoom-btn" aria-label="Zoom out"><svg width="25" height="24" viewBox="0 0 25 24"><path d="M0 12H25"/></svg></a>
  </div>
  <div class="attribution"><a>Leaflet</a> | © <a>OpenStreetMap</a> contributors, <a>CC-BY-SA</a></div>
  </div>
</main>
</div>
<i class="corner left"></i><i class="corner right"></i>
</body>
</html>
```
FILE: styles.css
```css
* { box-sizing: border-box; }
html { background: #fff; }
body { margin: 0; height: 2068px; overflow: hidden; position: relative; border-top: 2px solid #e8e9eb; background: #fff; color: #2f3e50; font: 30px/42.86px Lato, sans-serif; -webkit-text-stroke: .45px currentColor; }
.page { padding: 0 26px 0 22px; }
.navbar { display: flex; height: 120px; background: #313e4f; color: #fff; white-space: nowrap; }
.brand { width: 626px; padding: 37px 0 0 30px; font-size: 38px; line-height: 43px; letter-spacing: .04px; }
.tab { padding: 39px 0 0 30px; letter-spacing: .09px; }
.tab.active { width: 234px; background: #1c222d; }
.content { padding: 85px 30px 0; }
h2 { margin: 0 0 20px; font-size: 64px; line-height: 70.4px; font-weight: 400; word-spacing: -.65px; -webkit-text-stroke-width: .8px; }
p { margin: 0 0 21px; word-spacing: -.4px; }
ul { margin: 0 0 105px; padding-left: 80px; }
li { line-height: 43.5px; word-spacing: -.65px; }
.plain { font-variant-ligatures: none; }
.doi { color: #56ba9c; letter-spacing: -.13px; }
hr { height: 2px; margin: 0 0 42px; border: 0; background: #ecf0f1; }
.map { position: relative; width: 1461px; height: 800px; margin-left: 30px; overflow: hidden; background: #f2efe9; -webkit-text-stroke-width: 0; }
.tiles { display: block; }
.tiles path { fill: none; stroke-linejoin: round; }
.tiles .land { fill: #f2efe9; }
.tiles .farm { fill: #eff2dc; }
.tiles .heath { fill: #d6dfc0; filter: url(#wavy); }
.tiles .wood { fill: #c1dab5; filter: url(#rough); }
.tiles .forest { fill: #c1dab5; }
.tiles .grass { fill: #dcedc5; filter: url(#speckle); }
.tiles .meadow { fill: #dcedc5; filter: url(#wavy); }
.tiles .orchard { fill: #c9e5ba; filter: url(#speckle); }
.tiles .spot { fill: #d3e4c2; }
.tiles .urban { fill: #d9d7d5; filter: url(#speckle); }
.tiles .water { fill: #b2d2de; filter: url(#rough); }
.tiles .bay, .tiles .ponds { fill: #b2d2de; }
.tiles .river { stroke: #b0d3df; stroke-width: 8; filter: url(#wavy); }
.tiles .delta { stroke: #b0d3df; stroke-width: 19; filter: url(#wavy); }
.tiles .stream { stroke: #c1dde2; stroke-width: 5; }
.tiles .park { stroke: #94c18e; stroke-opacity: .6; stroke-width: 11; }
.tiles .minor { stroke: #c0bfc0; stroke-width: 6.500; }
.tiles .primary { stroke: #f1c98c; stroke-width: 9.500; }
.tiles .trunk { stroke: #ed9a7e; stroke-width: 10; }
.tiles .motor { stroke: #de748e; stroke-width: 11; }
.tiles .rail { stroke: #858381; stroke-opacity: .85; stroke-width: 6.500; }
.town { font-family: "Noto Sans", sans-serif; font-size: 20px; fill: #4c4c4c; stroke: #f7f5f1; stroke-opacity: .75; stroke-width: 4px; stroke-linejoin: round; paint-order: stroke; }
.city { font-size: 23.500px; fill: #404040; }
.site { fill: #808080; stroke: #555; stroke-width: 1; }
.zoom { position: absolute; left: 20px; top: 20px; width: 68px; border: 4px solid rgba(0,0,0,.2); border-radius: 8px; background: #fff; background-clip: padding-box; }
.zoom-btn { display: flex; align-items: center; justify-content: center; height: 60px; padding: 10px 0 0 3px; }
.zoom-btn:first-child { border-bottom: 2px solid #ccc; }
.zoom-btn path { fill: none; stroke: #000; stroke-width: 4.300; }
.attribution { position: absolute; right: 0; bottom: 0; height: 33px; padding: 0 9px; background: rgba(255,255,255,.7); color: #333; font: 22px/35px "Liberation Sans", Arial, sans-serif; letter-spacing: .14px; white-space: nowrap; }
.attribution a { color: #3078a6; }
.corner { position: absolute; bottom: 0; width: 20px; height: 20px; }
.left { left: 0; background: radial-gradient(circle at 100% 0, transparent 21px, #bbb 23px); }
.right { right: 0; background: radial-gradient(circle at 0 0, transparent 21px, #bbb 23px); }
```
